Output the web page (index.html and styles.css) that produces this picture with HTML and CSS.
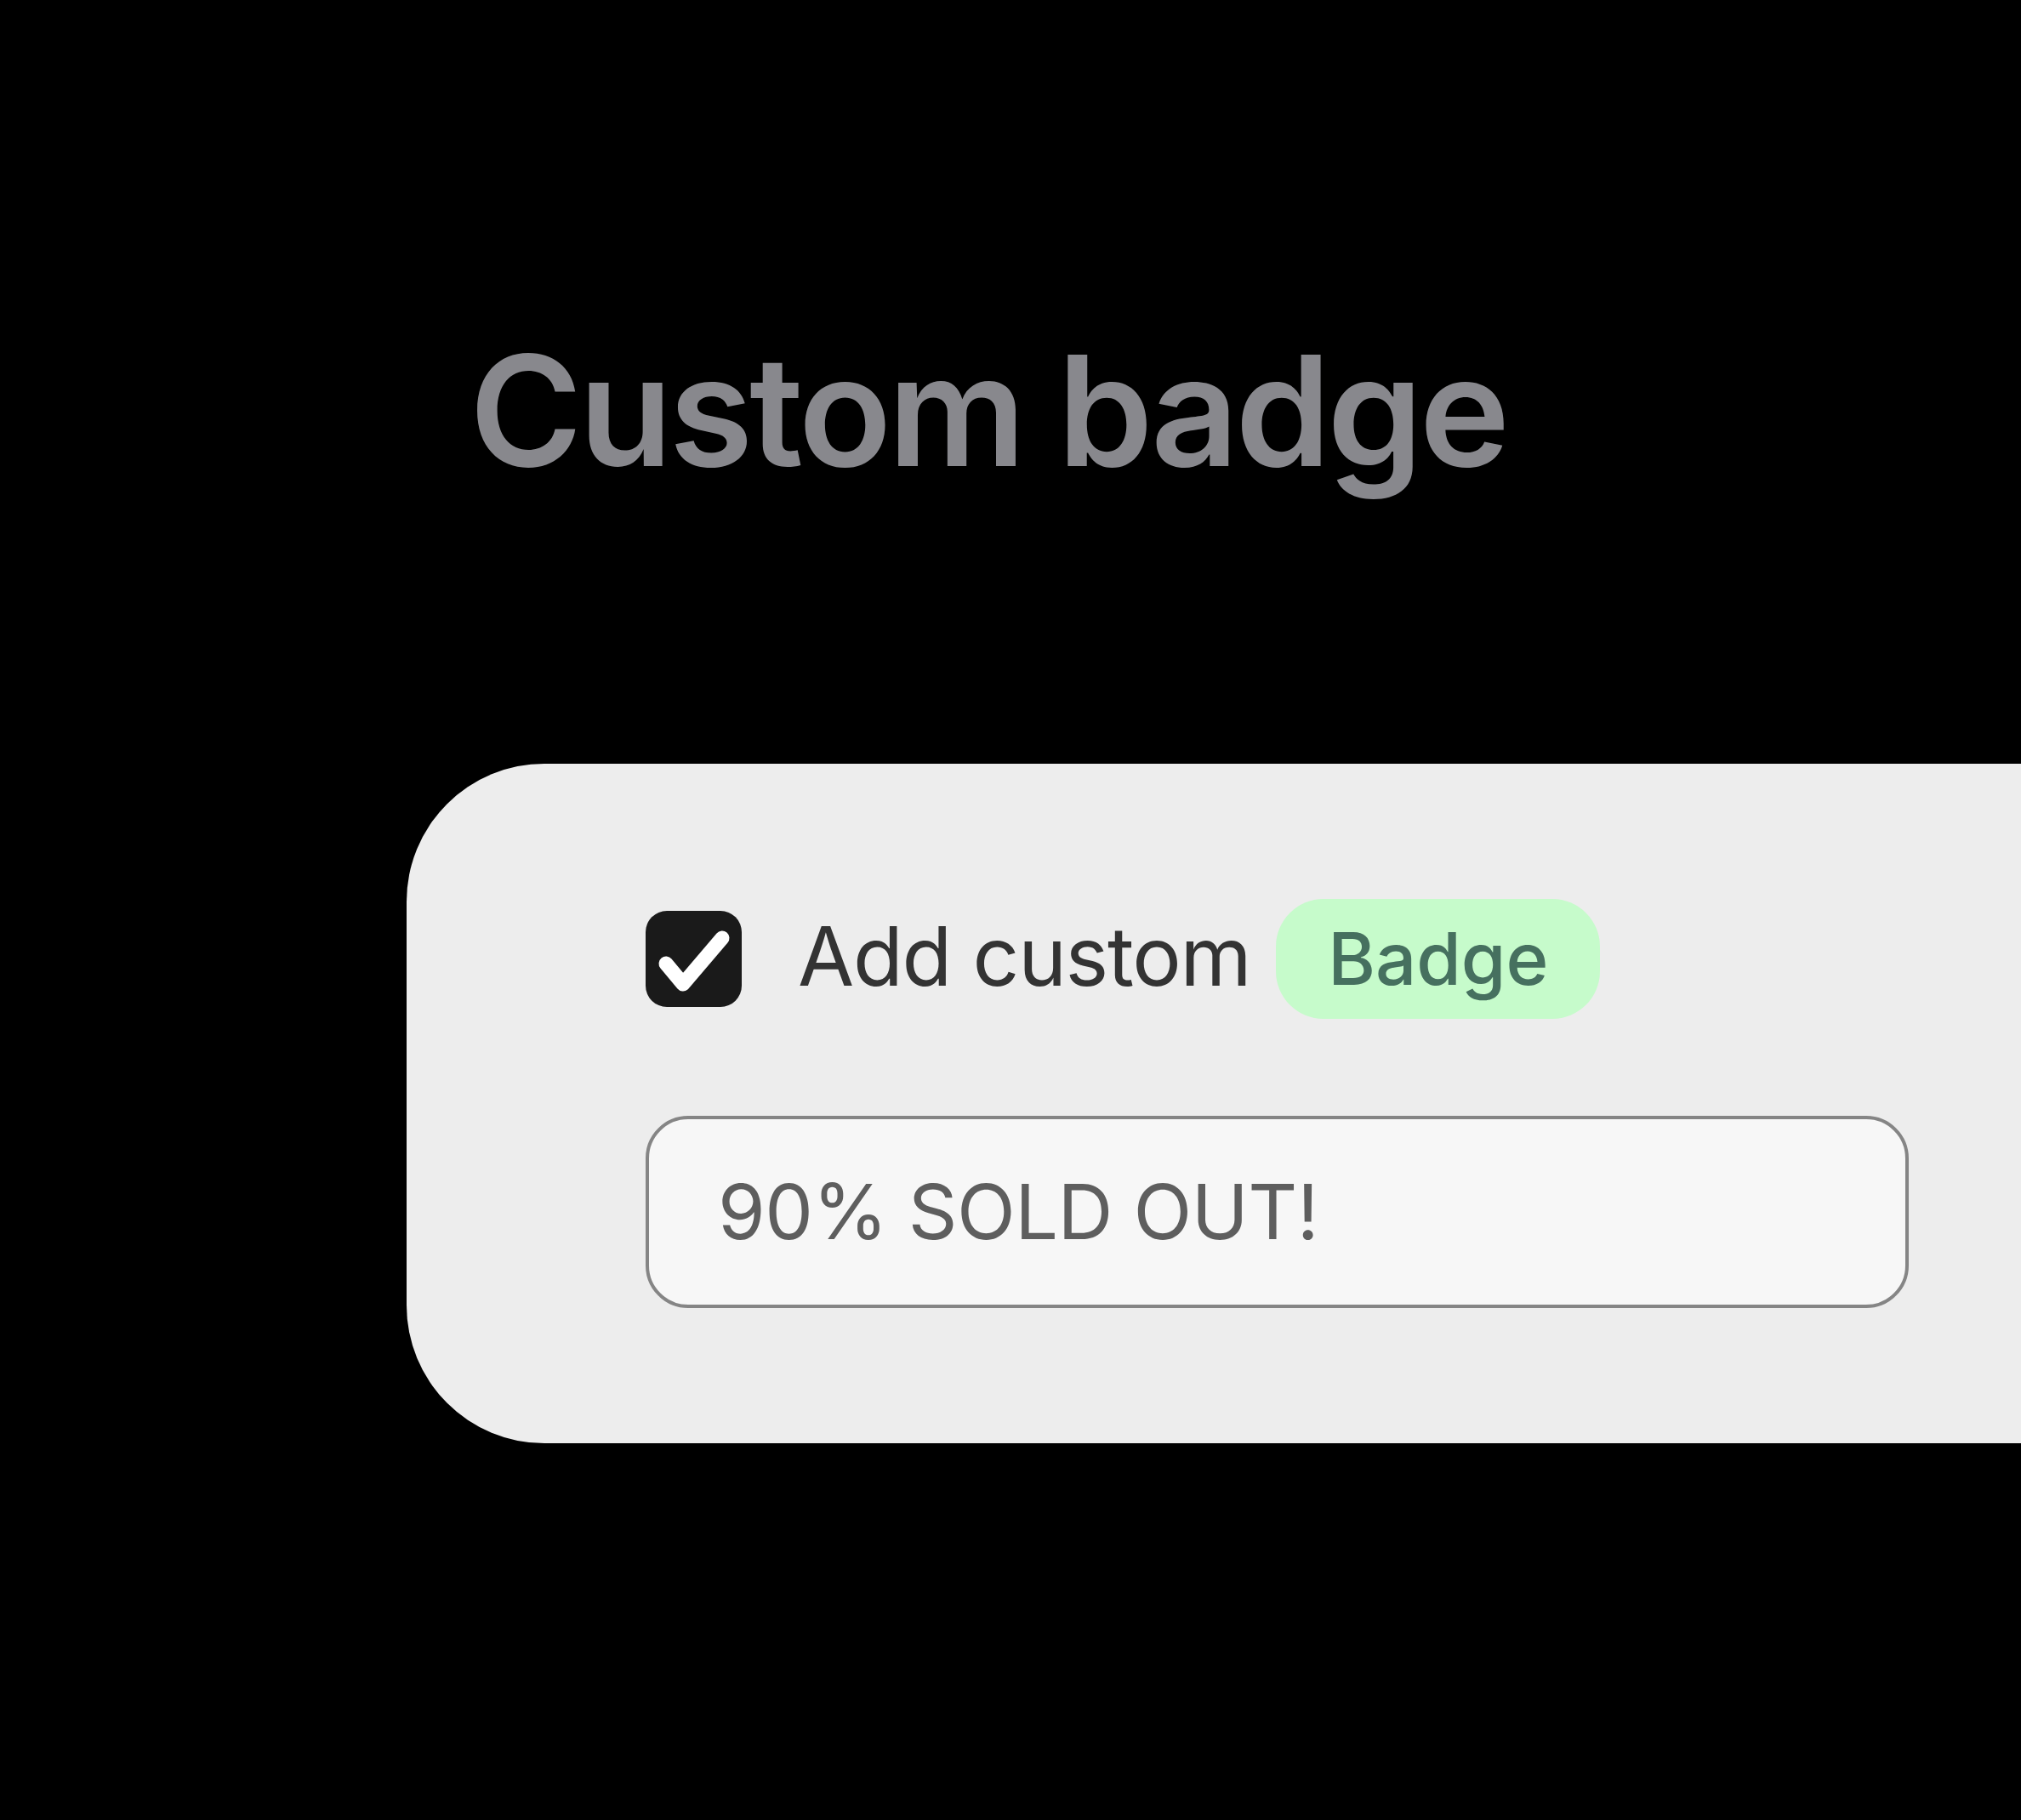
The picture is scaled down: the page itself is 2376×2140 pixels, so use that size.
FILE: index.html
```html
<!DOCTYPE html>
<html>
<head>
<meta charset="utf-8">
<link rel="stylesheet" href="styles.css">
</head>
<body>
<main class="page">
  <h1 class="title">Custom badge</h1>
  <section class="card">
    <div class="row">
      <span class="checkbox">
        <svg viewBox="0 0 113 113" width="113" height="113">
          <path d="M24 62 L44 86 L90 32" fill="none" stroke="#fff" stroke-width="17" stroke-linecap="round" stroke-linejoin="round"/>
        </svg>
      </span>
      <span class="label">Add custom</span>
      <span class="badge">Badge</span>
    </div>
    <div class="field">90% SOLD OUT!</div>
  </section>
</main>
</body>
</html>
```
FILE: styles.css
```css
html, body {
  margin: 0;
  padding: 0;
  background: #000;
  overflow: hidden;
}
body {
  width: 2376px;
  height: 2140px;
  font-family: Inter, "Noto Sans", sans-serif;
}
.page {
  padding-top: 393px;
  display: flex;
  flex-direction: column;
}
.title {
  margin: 0 0 0 552px;
  font-size: 180px;
  line-height: 1;
  font-weight: 600;
  color: #88888d;
  letter-spacing: -4.2px;
}
.card {
  margin: 325px -300px 0 478px;
  background: #ededed;
  border-radius: 162px;
  padding: 159px 0 159px 281px;
  display: flex;
  flex-direction: column;
  gap: 114px;
}
.row {
  display: flex;
  align-items: center;
}
.checkbox {
  width: 113px;
  height: 113px;
  border-radius: 25px;
  background: #1a1a1a;
  display: block;
  flex: none;
}
.checkbox svg { display: block; }
.label {
  margin-left: 66px;
  margin-bottom: 8px;
  font-size: 96px;
  line-height: 1;
  color: #333;
  letter-spacing: -1.3px;
}
.badge {
  margin-left: 30px;
  height: 141px;
  box-sizing: border-box;
  padding: 28px 61px;
  border-radius: 56px;
  background: #c6fbcb;
  color: #46705f;
  font-size: 85px;
  line-height: 1;
  font-weight: 500;
  display: flex;
  align-items: center;
}
.field {
  width: 1485px;
  height: 226px;
  box-sizing: border-box;
  border: 4px solid #858585;
  border-radius: 50px;
  background: #f7f7f7;
  padding-left: 81px;
  display: flex;
  align-items: center;
  font-size: 90px;
  line-height: 1;
  color: #5e5e5e;
  letter-spacing: -0.6px;
}
```
